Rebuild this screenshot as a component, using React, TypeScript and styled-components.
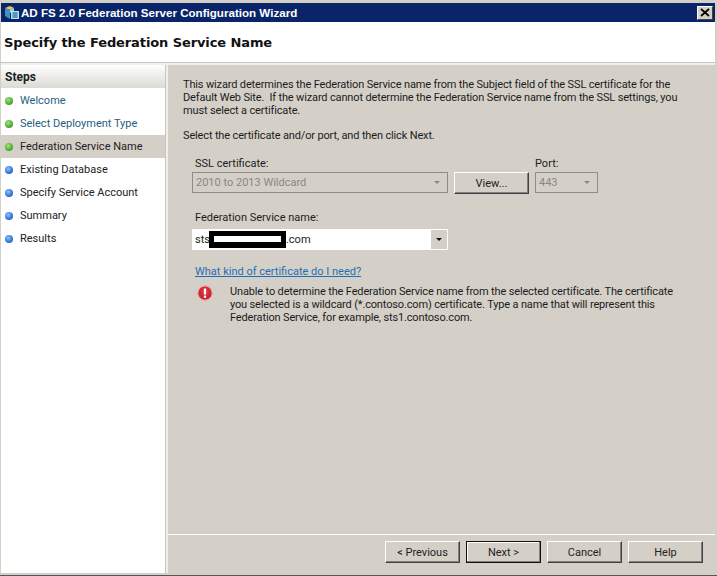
import React from "react";
import styled, { createGlobalStyle } from "styled-components";

const GlobalStyle = createGlobalStyle`
  html, body {
    margin: 0;
    padding: 0;
    width: 717px;
    height: 576px;
    overflow: hidden;
    background: #d4d0c8;
    font-family: Roboto, "Liberation Sans", Arial, sans-serif;
    font-size: 11px;
    color: #1c1c1c;
  }
`;

const face = "#d4d0c8";

const Window = styled.div`
  box-sizing: border-box;
  width: 717px;
  height: 576px;
  padding: 3px 2px 2px 1px;
  display: flex;
  flex-direction: column;
  background: ${face};
  border-bottom: 1px solid #555;
`;

const TitleBar = styled.div`
  box-sizing: border-box;
  height: 19px;
  flex: none;
  display: flex;
  align-items: center;
  background: #0a246a;
  color: #fff;
  font-family: "Liberation Sans", Arial, sans-serif;
  font-size: 11.6px;
  font-weight: bold;
  padding: 0 2px 0 3px;
`;

const TitleText = styled.span`
  margin-left: 1px;
  flex: 1;
  white-space: nowrap;
`;

const CloseButton = styled.div`
  width: 16px;
  height: 14px;
  box-sizing: border-box;
  background: ${face};
  border: 1px solid;
  border-color: #fff #404040 #404040 #fff;
  display: flex;
  align-items: center;
  justify-content: center;
`;

const Header = styled.div`
  box-sizing: border-box;
  height: 41px;
  flex: none;
  background: #fff;
  display: flex;
  align-items: center;
  padding-left: 3px;
  font-family: "DejaVu Sans", Verdana, sans-serif;
  font-size: 13px;
  font-weight: bold;
  color: #111;
  letter-spacing: -0.1px;
  border-bottom: 1px solid #c8c5be;
`;

const Body = styled.div`
  flex: 1;
  display: flex;
  gap: 2px;
  padding-top: 2px;
  min-height: 0;
  background: #f0efec;
`;

const Sidebar = styled.div`
  width: 164px;
  flex: none;
  background: #fff;
  border-right: 1px solid #c8c5be;
`;

const StepsHeading = styled.div`
  height: 23px;
  padding-left: 4px;
  display: flex;
  align-items: center;
  font-weight: bold;
  font-size: 12px;
  color: #222;
  background: linear-gradient(#fff, #dcdad5);
`;

const StepList = styled.div`
  display: flex;
  flex-direction: column;
  padding-top: 1px;
`;

const StepRow = styled.div<{ $current?: boolean; $done?: boolean }>`
  height: 23px;
  display: flex;
  align-items: center;
  gap: 7px;
  padding-left: 4px;
  background: ${(p) => (p.$current ? face : "transparent")};
  color: ${(p) => (p.$done && !p.$current ? "#1f5f80" : "#222")};
`;

const Dot = styled.span<{ $done?: boolean }>`
  width: 8px;
  height: 8px;
  flex: none;
  border-radius: 50%;
  background: ${(p) =>
    p.$done
      ? "radial-gradient(circle at 40% 35%, #a5e07a, #3fa52a 70%, #5c8f4c)"
      : "radial-gradient(circle at 40% 35%, #8fc0f5, #2468d4 70%, #4a6fa5)"};
`;

const Main = styled.div`
  flex: 1;
  display: flex;
  flex-direction: column;
  background: ${face};
  min-width: 0;
`;

const Content = styled.div`
  flex: 1;
  padding: 13px 0 0 15px;
`;

const Paragraph = styled.p`
  margin: 0;
  line-height: 13px;
  letter-spacing: -0.15px;
  white-space: nowrap;
`;

const Prompt = styled(Paragraph)`
  margin-top: 12px;
`;

const Form = styled.div`
  margin: 14px 0 0 9px;
  display: grid;
  grid-template-columns: 256px 75px 63px;
  column-gap: 6px;
  align-items: start;
`;

const FieldLabel = styled.div<{ $gap?: number; $flush?: boolean }>`
  line-height: 14px;
  padding: 1px 0 0 ${(p) => (p.$flush ? 0 : 3)}px;
  margin-bottom: ${(p) => p.$gap ?? 1}px;
`;

const Combo = styled.div<{ $active?: boolean }>`
  box-sizing: border-box;
  height: 21px;
  display: flex;
  align-items: center;
  justify-content: space-between;
  padding: 0 3px;
  color: ${(p) => (p.$active ? "#222" : "#8a8780")};
  background: ${(p) => (p.$active ? "#fff" : face)};
  border: ${(p) => (p.$active ? "none" : "1px solid #8f8d87")};
`;

const Arrow = styled.span<{ $active?: boolean }>`
  width: 0;
  height: 0;
  border-left: 3px solid transparent;
  border-right: 3px solid transparent;
  border-top: 3px solid ${(p) => (p.$active ? "#111" : "#8a8780")};
  margin-right: ${(p) => (p.$active ? 0 : 4)}px;
`;

const ArrowBox = styled.span`
  box-sizing: border-box;
  width: 16px;
  height: 19px;
  margin-right: -2px;
  display: flex;
  align-items: center;
  justify-content: center;
  background: ${face};
`;

const Button = styled.div<{ $default?: boolean }>`
  box-sizing: border-box;
  width: 75px;
  height: 22px;
  display: flex;
  align-items: center;
  justify-content: center;
  background: ${face};
  color: #222;
  border: 1px solid;
  border-color: ${(p) => (p.$default ? "#111" : "#fff #404040 #404040 #fff")};
  box-shadow: ${(p) =>
    p.$default ? "inset -1px -1px 0 #808080, inset 1px 1px 0 #fff" : "inset -1px -1px 0 #808080"};
`;

const NameField = styled.div`
  margin: 16px 0 0 9px;
  width: 256px;
`;

const NameValue = styled.span`
  display: flex;
  align-items: center;
`;

const Redaction = styled.span`
  box-sizing: border-box;
  display: inline-block;
  width: 77px;
  height: 17px;
  margin-left: -1px;
  background: #fff;
  border: solid #000;
  border-width: 5px 5px 6px;
`;

const HelpLink = styled.a`
  display: block;
  margin: 15px 0 0 12px;
  line-height: 14px;
  color: #1f6fb5;
  text-decoration: underline;
`;

const ErrorRow = styled.div`
  display: flex;
  margin: 5px 0 0 14px;
`;

const ErrorIcon = styled.svg`
  width: 16px;
  height: 16px;
  flex: none;
  margin-top: 1px;
`;

const ErrorText = styled(Paragraph)`
  margin: 1px 0 0 17px;
`;

const Footer = styled.div`
  box-sizing: border-box;
  flex: none;
  height: 39px;
  border-top: 1px solid #fff;
  display: flex;
  justify-content: flex-end;
  gap: 6px;
  padding: 6px 12px 0 0;
`;

const steps = [
  { name: "Welcome", done: true },
  { name: "Select Deployment Type", done: true },
  { name: "Federation Service Name", done: true, current: true },
  { name: "Existing Database" },
  { name: "Specify Service Account" },
  { name: "Summary" },
  { name: "Results" },
];

const App: React.FC = () => {
  return (
    <Window>
      <GlobalStyle />
      <TitleBar>
        <svg width="16" height="16" viewBox="0 0 16 16">
          <path d="M1 3l5-2 4 2-4 2z" fill="#e8c65a" />
          <path d="M1 3l5 2v9l-5-3z" fill="#3d8fc4" />
          <path d="M6 5l4-2v3l-4 2z" fill="#9fd0e8" />
          <rect x="7" y="6" width="8" height="8" fill="#bfe3f2" />
          <path d="M8 8h6M8 10h6M8 12h6M10 7v6M12 7v6" stroke="#2f7fb0" strokeWidth="1" />
        </svg>
        <TitleText>AD FS 2.0 Federation Server Configuration Wizard</TitleText>
        <CloseButton>
          <svg width="10" height="9" viewBox="0 0 10 9">
            <path d="M1 1l8 7M9 1l-8 7" stroke="#000" strokeWidth="1.8" />
          </svg>
        </CloseButton>
      </TitleBar>
      <Header>Specify the Federation Service Name</Header>
      <Body>
        <Sidebar>
          <StepsHeading>Steps</StepsHeading>
          <StepList>
            {steps.map((s) => (
              <StepRow key={s.name} $current={s.current} $done={s.done}>
                <Dot $done={s.done} />
                {s.name}
              </StepRow>
            ))}
          </StepList>
        </Sidebar>
        <Main>
          <Content>
            <Paragraph>
              This wizard determines the Federation Service name from the Subject field of the SSL certificate for the
              <br />
              Default Web Site.&nbsp; If the wizard cannot determine the Federation Service name from the SSL settings, you
              <br />
              must select a certificate.
            </Paragraph>
            <Prompt>Select the certificate and/or port, and then click Next.</Prompt>
            <Form>
              <div>
                <FieldLabel>SSL certificate:</FieldLabel>
                <Combo>
                  2010 to 2013 Wildcard
                  <Arrow />
                </Combo>
              </div>
              <div>
                <FieldLabel>&nbsp;</FieldLabel>
                <Button>View...</Button>
              </div>
              <div>
                <FieldLabel $flush>Port:</FieldLabel>
                <Combo>
                  443
                  <Arrow />
                </Combo>
              </div>
            </Form>
            <NameField>
              <FieldLabel $gap={4}>Federation Service name:</FieldLabel>
              <Combo $active>
                <NameValue>
                  sts
                  <Redaction />
                  .com
                </NameValue>
                <ArrowBox>
                  <Arrow $active />
                </ArrowBox>
              </Combo>
            </NameField>
            <HelpLink>What kind of certificate do I need?</HelpLink>
            <ErrorRow>
              <ErrorIcon viewBox="0 0 16 16">
                <defs>
                  <radialGradient id="errorFill" cx="50%" cy="40%" r="60%">
                    <stop offset="0%" stopColor="#e8404a" />
                    <stop offset="100%" stopColor="#b81c2a" />
                  </radialGradient>
                </defs>
                <circle cx="8" cy="8" r="7.2" fill="url(#errorFill)" stroke="#eda3a6" strokeWidth="1.2" />
                <rect x="6.9" y="3.5" width="2.2" height="6" fill="#fff" />
                <rect x="6.9" y="10.6" width="2.2" height="2.2" fill="#fff" />
              </ErrorIcon>
              <ErrorText>
                Unable to determine the Federation Service name from the selected certificate. The certificate
                <br />
                you selected is a wildcard (*.contoso.com) certificate. Type a name that will represent this
                <br />
                Federation Service, for example, sts1.contoso.com.
              </ErrorText>
            </ErrorRow>
          </Content>
          <Footer>
            <Button>&lt; Previous</Button>
            <Button $default>Next &gt;</Button>
            <Button>Cancel</Button>
            <Button>Help</Button>
          </Footer>
        </Main>
      </Body>
    </Window>
  );
};

export default App;
